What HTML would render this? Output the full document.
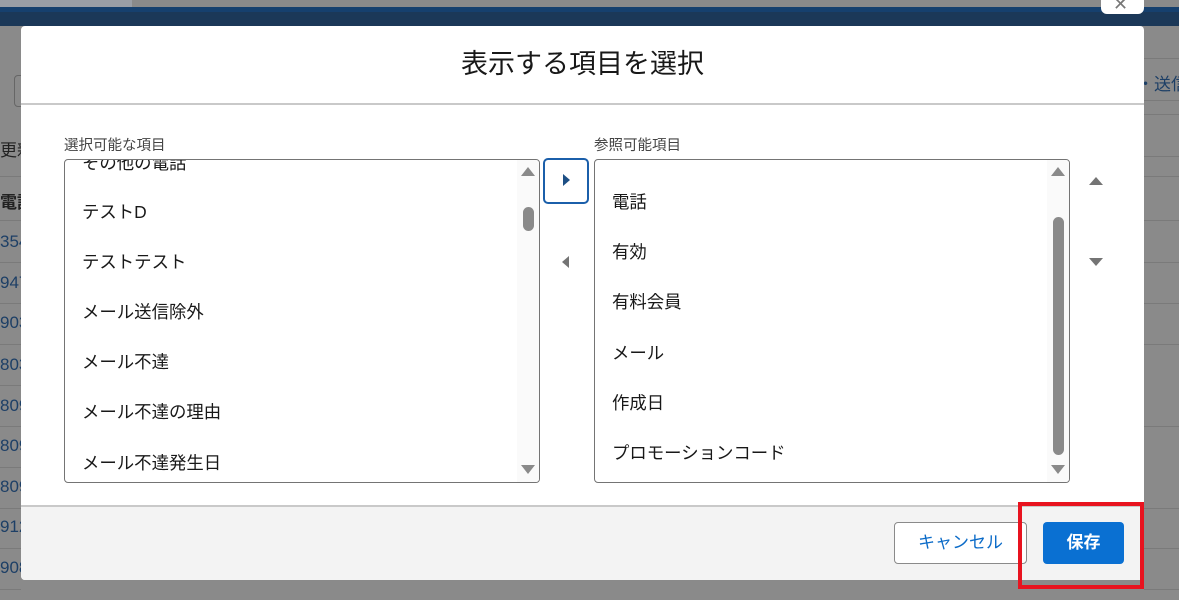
<!DOCTYPE html>
<html><head><meta charset="utf-8"><style>
body{margin:0;width:1179px;height:600px;overflow:hidden;background:#8a8a8a;font-family:"Liberation Sans","Noto Sans CJK JP",sans-serif;position:relative}
.a{position:absolute;white-space:nowrap}
.bg{color:#1d3f66;font-size:17px}
.line{position:absolute;left:0;width:21px;height:1px;background:#7a7a7a}
.rline{position:absolute;left:1144px;width:35px;height:1px;background:#7a7a7a}
.box{position:absolute;top:159px;width:474px;height:322px;border:1px solid #747474;border-radius:4px;background:#fff;overflow:hidden}
.it{position:absolute;left:17px;font-size:17.4px;color:#181818;line-height:22px;white-space:nowrap}
.sb{position:absolute;right:0;top:0;width:22px;height:100%;background:#fafafa}
.up{position:absolute;width:0;height:0;border-left:7px solid transparent;border-right:7px solid transparent;border-bottom:9px solid #8a8a8a}
.dn{position:absolute;width:0;height:0;border-left:7px solid transparent;border-right:7px solid transparent;border-top:9px solid #8a8a8a}
.thumb{position:absolute;width:11px;background:#8a8a8a;border-radius:6px}
</style></head><body>
<div class="a" style="left:0;top:0;width:132px;height:7px;background:#9a9ea6"></div>
<div class="a" style="left:0;top:7px;width:1179px;height:5px;background:#16406e"></div>
<div class="a" style="left:0;top:12px;width:1179px;height:14px;background:#1b3858"></div>
<div class="a" style="left:1101px;top:0;width:43px;height:14px;background:#fff;border-radius:0 0 6px 6px"><div style="position:absolute;left:12px;top:-6px;font-size:18px;color:#777">✕</div></div>
<div class="a" style="left:14px;top:75px;width:20px;height:30px;border:1px solid #666;border-radius:4px"></div>
<div class="a bg" style="left:0;top:136px;color:#222">更新</div>
<div class="line" style="top:176px"></div>
<div class="a bg" style="left:0;top:188px;color:#222;font-weight:bold">電話</div>
<div class="line" style="top:220px"></div>
<div class="a bg" style="left:0;top:232px">354</div><div class="line" style="top:262px"></div>
<div class="a bg" style="left:0;top:273px">947</div><div class="line" style="top:303px"></div>
<div class="a bg" style="left:0;top:313px">903</div><div class="line" style="top:344px"></div>
<div class="a bg" style="left:0;top:355px">803</div><div class="line" style="top:385px"></div>
<div class="a bg" style="left:0;top:396px">809</div><div class="line" style="top:426px"></div>
<div class="a bg" style="left:0;top:436px">809</div><div class="line" style="top:467px"></div>
<div class="a bg" style="left:0;top:477px">809</div><div class="line" style="top:508px"></div>
<div class="a bg" style="left:0;top:517px">912</div><div class="line" style="top:548px"></div>
<div class="a bg" style="left:0;top:558px">908</div><div class="line" style="top:589px"></div>
<div class="a bg" style="left:1137px;top:70px">・送信</div>
<div class="rline" style="top:58px"></div><div class="rline" style="top:100px"></div><div class="rline" style="top:114px"></div><div class="rline" style="top:156px"></div><div class="rline" style="top:176px"></div><div class="rline" style="top:220px"></div><div class="rline" style="top:262px"></div><div class="rline" style="top:303px"></div><div class="rline" style="top:344px"></div><div class="rline" style="top:426px"></div><div class="rline" style="top:508px"></div><div class="rline" style="top:548px"></div><div class="rline" style="top:589px"></div>

<div class="a" style="left:21px;top:26px;width:1123px;height:554px;background:#fff;border-radius:4px;overflow:hidden">
 <div class="a" style="left:0;top:0;width:100%;height:77px;border-bottom:2px solid #c9c9c9;text-align:center;font-size:27px;line-height:77px;color:#181818">表示する項目を選択</div>
 <div class="a" style="left:0;top:479px;width:100%;height:75px;background:#f3f3f3;border-top:2px solid #c9c9c9"></div>
</div>
<div class="a" style="left:64px;top:134px;font-size:14.5px;color:#444">選択可能な項目</div>
<div class="a" style="left:594px;top:134px;font-size:14.5px;color:#444">参照可能項目</div>
<div class="box" style="left:64px">
 <div class="it" style="top:-8px">その他の電話</div>
 <div class="it" style="top:41px">テストD</div>
 <div class="it" style="top:91px">テストテスト</div>
 <div class="it" style="top:141px">メール送信除外</div>
 <div class="it" style="top:191px">メール不達</div>
 <div class="it" style="top:241px">メール不達の理由</div>
 <div class="it" style="top:292px">メール不達発生日</div>
 <div class="sb"><div class="up" style="left:4px;top:7px"></div><div class="thumb" style="left:6px;top:47px;height:24px"></div><div class="dn" style="left:4px;top:305px"></div></div>
</div>
<div class="box" style="left:594px">
 <div class="it" style="top:31px">電話</div>
 <div class="it" style="top:81px">有効</div>
 <div class="it" style="top:131px">有料会員</div>
 <div class="it" style="top:182px">メール</div>
 <div class="it" style="top:232px">作成日</div>
 <div class="it" style="top:282px">プロモーションコード</div>
 <div class="sb"><div class="up" style="left:4px;top:7px"></div><div class="thumb" style="left:6px;top:57px;height:238px"></div><div class="dn" style="left:4px;top:305px"></div></div>
</div>
<div class="a" style="left:543px;top:158px;width:42px;height:42px;border:2px solid #1b5faa;border-radius:5px;background:#fff"></div>
<div class="a" style="left:563px;top:174px;width:0;height:0;border-top:6px solid transparent;border-bottom:6px solid transparent;border-left:7px solid #1d4f85"></div>
<div class="a" style="left:562px;top:256px;width:0;height:0;border-top:6px solid transparent;border-bottom:6px solid transparent;border-right:7px solid #747474"></div>
<div class="a" style="left:1089px;top:177px;width:0;height:0;border-left:7px solid transparent;border-right:7px solid transparent;border-bottom:8px solid #747474"></div>
<div class="a" style="left:1089px;top:258px;width:0;height:0;border-left:7px solid transparent;border-right:7px solid transparent;border-top:8px solid #747474"></div>
<div class="a" style="left:894px;top:522px;width:131px;height:40px;border:1px solid #8a8a8a;border-radius:4px;background:#fff;color:#0b6bc8;font-size:17px;line-height:40px;text-align:center">キャンセル</div>
<div class="a" style="left:1043px;top:522px;width:81px;height:42px;border-radius:4px;background:#0a70d2;color:#fff;font-size:17px;line-height:42px;text-align:center;font-weight:bold">保存</div>
<div class="a" style="left:1018px;top:502px;width:118px;height:79px;border:4px solid #e8131f"></div>
</body></html>
